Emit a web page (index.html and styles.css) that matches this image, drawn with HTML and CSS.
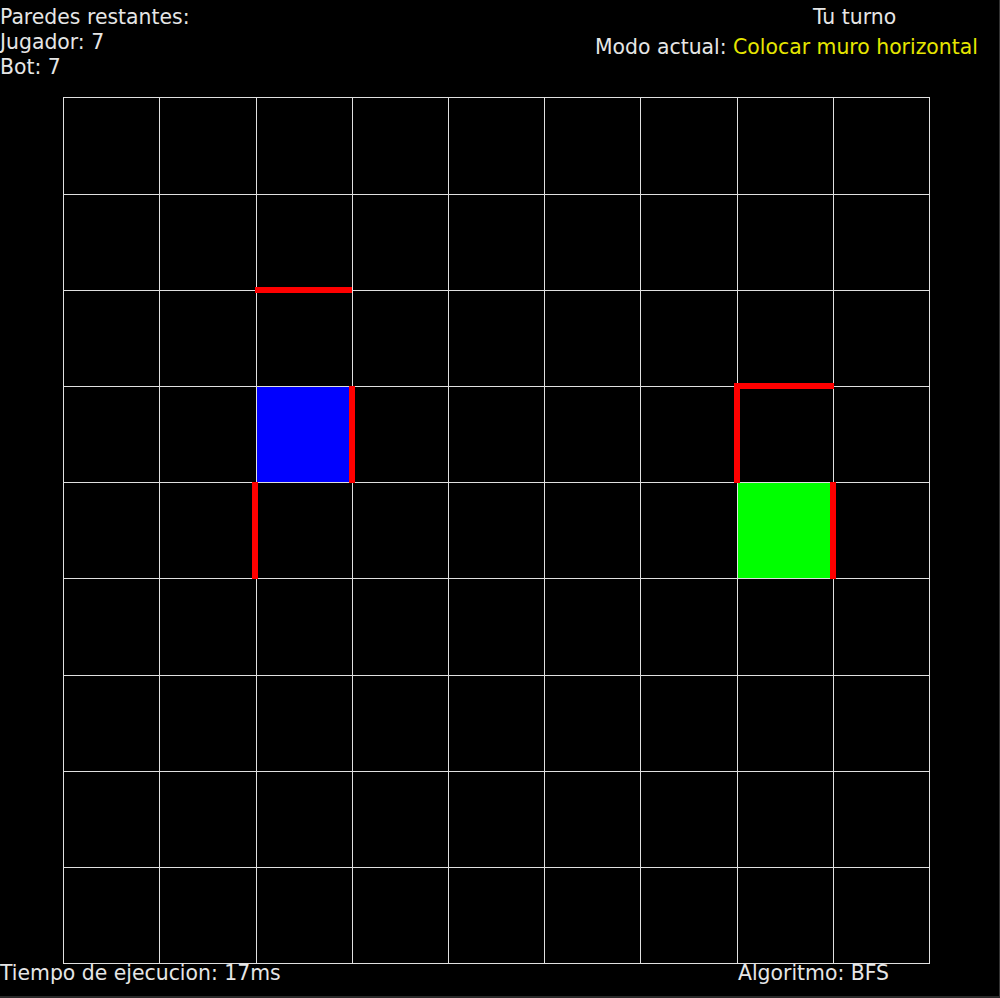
FILE: index.html
```html
<!DOCTYPE html>
<html lang="es">
<head>
  <meta charset="UTF-8" />
  <meta name="viewport" content="width=device-width, initial-scale=1.0"/>
  <title>Quoridor</title>
  <link rel="stylesheet" href="styles.css">
</head>
<body>
  <div class="frame">
    <div class="hud">
      <div class="walls-left">
        <div>Paredes restantes:</div>
        <div>Jugador: 7</div>
        <div>Bot: 7</div>
      </div>
      <div class="status">
        <div class="turn">Tu turno</div>
        <div class="mode">Modo actual: <span class="mode-value">Colocar muro horizontal</span></div>
      </div>
    </div>

    <svg class="board" width="867" height="867" viewBox="0 0 867 867" shape-rendering="crispEdges">
      <!-- pieces -->
      <rect x="193" y="289" width="96" height="96" fill="#0000ff"/>
      <rect x="674" y="385" width="96" height="96" fill="#00ff00"/>

      <!-- grid -->
      <g stroke="#e0e0e0" stroke-width="1">
        <line x1="0.5" y1="0" x2="0.5" y2="867"/>
        <line x1="96.5" y1="0" x2="96.5" y2="867"/>
        <line x1="193.5" y1="0" x2="193.5" y2="867"/>
        <line x1="289.5" y1="0" x2="289.5" y2="867"/>
        <line x1="385.5" y1="0" x2="385.5" y2="867"/>
        <line x1="481.5" y1="0" x2="481.5" y2="867"/>
        <line x1="577.5" y1="0" x2="577.5" y2="867"/>
        <line x1="674.5" y1="0" x2="674.5" y2="867"/>
        <line x1="770.5" y1="0" x2="770.5" y2="867"/>
        <line x1="866.5" y1="0" x2="866.5" y2="867"/>

        <line x1="0" y1="0.5" x2="867" y2="0.5"/>
        <line x1="0" y1="97.5" x2="867" y2="97.5"/>
        <line x1="0" y1="193.5" x2="867" y2="193.5"/>
        <line x1="0" y1="289.5" x2="867" y2="289.5"/>
        <line x1="0" y1="385.5" x2="867" y2="385.5"/>
        <line x1="0" y1="481.5" x2="867" y2="481.5"/>
        <line x1="0" y1="578.5" x2="867" y2="578.5"/>
        <line x1="0" y1="674.5" x2="867" y2="674.5"/>
        <line x1="0" y1="770.5" x2="867" y2="770.5"/>
        <line x1="0" y1="866.5" x2="867" y2="866.5"/>
      </g>

      <!-- walls -->
      <g fill="#ff0000">
        <rect x="192" y="190" width="97" height="6"/>
        <rect x="286" y="289" width="6" height="97"/>
        <rect x="189" y="385" width="6" height="97"/>
        <rect x="671" y="286" width="100" height="6"/>
        <rect x="671" y="286" width="6" height="100"/>
        <rect x="767" y="385" width="6" height="97"/>
      </g>
    </svg>

    <div class="footer">
      <div>Tiempo de ejecucion: 17ms</div>
      <div>Algoritmo: BFS</div>
    </div>
  </div>
</body>
</html>
```

FILE: styles.css
```css
:root {
  --bg: #000;
  --text: #e6e6e6;
  --accent: #e6e600;
}

html, body {
  margin: 0;
  padding: 0;
  background: var(--bg);
}

body {
  font-family: "DejaVu Sans", Verdana, sans-serif;
  font-size: 20.4px;
  color: var(--text);
}

.frame {
  width: 1000px;
  height: 998px;
  box-sizing: border-box;
  border-right: 1px solid #333;
  border-bottom: 2px solid #2a2a2a;
  overflow: hidden;
}

.hud {
  display: grid;
  grid-template-columns: 595px 1fr;
  height: 97px;
}

.walls-left {
  padding-top: 5px;
  line-height: 25px;
}

.status {
  padding-top: 5px;
  line-height: 25px;
}

.turn {
  padding-left: 218px;
}

.mode {
  margin-top: 5px;
  white-space: nowrap;
}

.mode-value {
  color: var(--accent);
}

.board {
  display: block;
  margin-left: 63px;
}

.footer {
  display: grid;
  grid-template-columns: 738px 1fr;
  line-height: 18px;
  white-space: nowrap;
}
```
